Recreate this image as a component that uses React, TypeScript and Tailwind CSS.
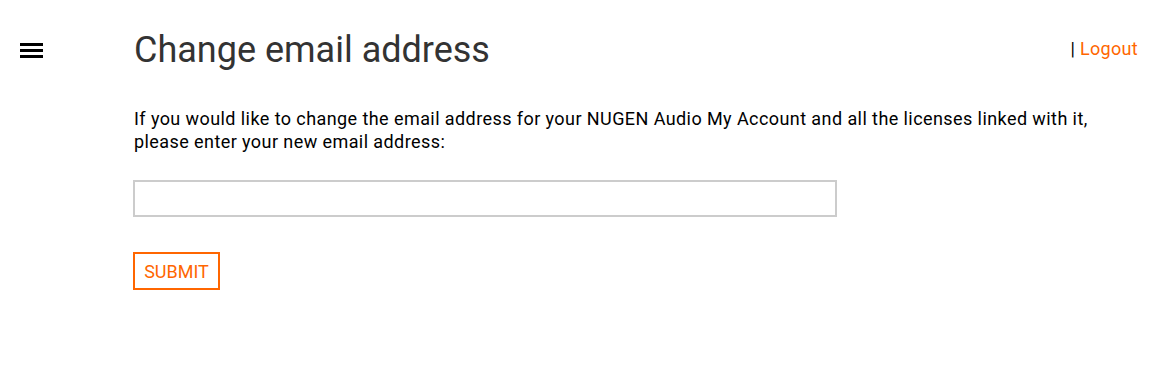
import React from "react";

export default function App() {
  return (
    <div className="min-h-[389px] w-full bg-white text-black" style={{ fontFamily: "Roboto, 'Liberation Sans', sans-serif" }}>
      <div className="flex">
        <div className="w-[133px] shrink-0 pl-[20px] pt-[43px]">
          <div className="flex w-[23px] flex-col gap-[3px]">
            <span className="block h-[3px] w-full bg-black" />
            <span className="block h-[3px] w-full bg-black" />
            <span className="block h-[3px] w-full bg-black" />
          </div>
        </div>
        <div className="flex-1 pr-[30px]">
          <div className="flex items-start justify-between pt-[30px]">
            <h1 className="pl-px text-[36px] leading-[40px] font-normal text-[#333333]">Change email address</h1>
            <div className="pt-[7px] text-[18px] leading-[24px] tracking-[0.3px]">
              <span className="text-black">| </span>
              <a className="text-[#ff6600]" href="#">Logout</a>
            </div>
          </div>
          <p className="mt-[37px] pl-px text-[18px] leading-[23px] tracking-[0.42px]">
            If you would like to change the email address for your NUGEN Audio My Account and all the licenses linked with it,
            <br />
            please enter your new email address:
          </p>
          <input className="mt-[27px] block h-[37px] w-[704px] border-2 border-[#cccccc] bg-white outline-none" type="email" />
          <button className="mt-[35px] block h-[38px] w-[87px] border-2 border-[#ff6600] text-[18px] text-[#ff6600]">SUBMIT</button>
        </div>
      </div>
    </div>
  );
}
